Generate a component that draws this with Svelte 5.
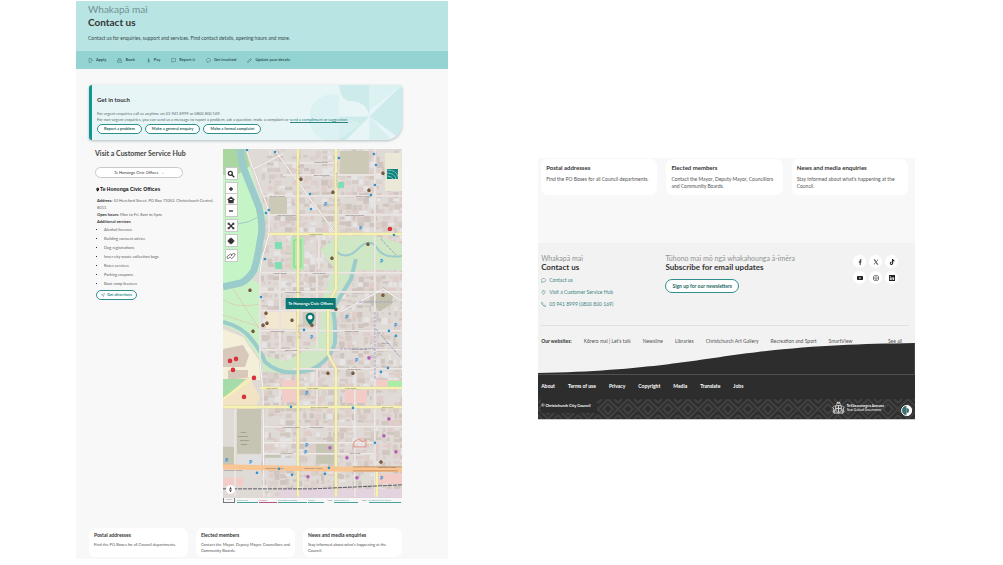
<script lang="ts">
  type Box = { x: number; y: number; w: number; h: number; tone: string };

  const actions = [
    { label: 'Apply', icon: 'M2 1h5v3M2 1v8h5M5 5h4M7.500 3.500L9 5 7.500 6.500' },
    { label: 'Book', icon: 'M1 4h8v5H1zM3 4V1h4v3M3 6h4' },
    { label: 'Pay', icon: 'M7 2H4v3h3v3H3M5 1v8' },
    { label: 'Report it', icon: 'M1 1h8v6H5L3 9V7H1z' },
    { label: 'Get involved', icon: 'M3 1h4l2 2v3L7 8H4L2 9V7L1 5V3z' },
    { label: 'Update your details', icon: 'M1 9l1-3 5-5 2 2-5 5zM6 2l2 2' }
  ];

  const services = [
    'Alcohol licences',
    'Building consent advice',
    'Dog registrations',
    'Inner city waste collection bags',
    'Rates services',
    'Parking coupons',
    'Boat ramp licences'
  ];

  const cards = [
    { title: 'Postal addresses', text: 'Find the PO Boxes for all Council departments.' },
    { title: 'Elected members', text: 'Contact the Mayor, Deputy Mayor, Councillors and Community Boards.' },
    { title: 'News and media enquiries', text: "Stay informed about what's happening at the Council." }
  ];

  const contacts = [
    { label: 'Contact us', icon: 'M3 1h4l2 2v3L7 8H4L1 9l1-2-1-2V3z' },
    { label: 'Visit a Customer Service Hub', icon: 'M5 9L2 5V3l1.500-2h3L8 3v2zM5 3v1.500' },
    { label: '03 941 8999 (0800 800 169)', icon: 'M1 1h2l1 3-1 1 2 2 1-1 3 1v2H7L1 3z' }
  ];

  const websites = ['Kōrero mai | Let’s talk', 'Newsline', 'Libraries', 'Christchurch Art Gallery', 'Recreation and Sport', 'SmartView'];
  const legal = ['About', 'Terms of use', 'Privacy', 'Copyright', 'Media', 'Translate', 'Jobs'];

  const social = [
    { name: 'Facebook', d: 'M4.500 10V6H3V4h1.500V2.500Q4.500 0 7.500.5V2H6.500Q6 2 6 3v1h1.500L7 6H6v4z' },
    { name: 'X', d: 'M1 1h2.500L9 9H6.500zM2.200 1.700L7 8.300h.8L3 1.700zM8 1h1L6 4.600 5.500 4zM1 9h1l2.700-3-.5-.7z' },
    { name: 'TikTok', d: 'M5 0h2q.2 2 2.200 2.300V4Q8 4 7 3.300V7q-.2 3-3 3T1.300 7.200Q1.300 4.300 4.300 4.300V6q-1.400 0-1.400 1.200T4 8.300 5 7z' },
    { name: 'YouTube', d: 'M1 1.500h8l1 1v5l-1 1H1l-1-1v-5zM4 3.500v3L6.700 5z' },
    { name: 'Instagram', d: 'M3 0h4l3 3v4l-3 3H3L0 7V3zM3 1L1 3v4l2 2h4l2-2V3L7 1zM5 2.500A2.500 2.500 0 115 7.500 2.500 2.500 0 015 2.500zM5 3.500a1.500 1.500 0 100 3 1.500 1.500 0 000-3z' },
    { name: 'LinkedIn', d: 'M0 0h10v10H0zM1.500 4v4.500H3V4zM1.500 1.500V3H3V1.500zM4 4v4.500h1.500V6Q6.500 4.500 7 6v2.500h1.500v-3Q8 3 5.500 4.500V4z' }
  ];

  // Building footprints scattered over the city blocks
  function makeBuildings(): Box[] {
    let seed = 17;
    const rand = () => {
      seed = (seed * 16807) % 2147483647;
      return seed / 2147483647;
    };
    const tones = ['#d2c7c0', '#d5cbc4', '#cec4bd', '#dbd0ca', '#e6e4e5', '#dfcdc9'];
    const list: Box[] = [];
    for (let y = 0; y < 350; y += 6) {
      for (let x = 38; x < 179; x += 6) {
        if (rand() < 0.15) continue;
        list.push({
          x: x + rand() * 2,
          y: y + rand() * 2,
          w: 2 + rand() * 6,
          h: 2 + rand() * 5,
          tone: tones[Math.floor(rand() * tones.length)]
        });
      }
    }
    return list;
  }

  const buildings = makeBuildings();

  const streets = [
    'M23 0L40 46 46 62V85L39 110 37 124V214L40 240 41 348',
    'M30 20L60 5M51 0L113 85M152 0V348M96 85V120',
    'M40 47H179M60 26H152M60 14H113M46 66H179',
    'M37 124H179M37 143H179M37 162H120L160 140 179 152M37 182H179M37 201H179M70 220H179',
    'M41 278H179M41 294H152M41 305H152M57 239V258M12 258V348M94 124V201M57 124V201M132 220V348M94 220V258'
  ];

  const labels = [
    { x: 91, y: 14, t: 'Peacock Street' }, { x: 91, y: 27, t: 'Beveridge Street' }, { x: 47, y: 48, t: 'Salisbury Street' },
    { x: 133, y: 48, t: 'Salisbury Street' }, { x: 54, y: 67, t: 'Peterborough Street' }, { x: 122, y: 67, t: 'Peterborough Street' },
    { x: 86, y: 86, t: 'Kilmore Street' }, { x: 50, y: 125, t: 'Armagh Street' }, { x: 89, y: 125, t: 'Armagh Street' },
    { x: 62, y: 144, t: 'Gloucester Street' }, { x: 47, y: 183, t: 'Hereford Street' }, { x: 121, y: 183, t: 'Hereford Street' },
    { x: 62, y: 202, t: 'Cashel Street' }, { x: 128, y: 201, t: 'Cashel Street Mall' }, { x: 124, y: 221, t: 'Lichfield Street' },
    { x: 43, y: 240, t: 'Tuam Street' }, { x: 84, y: 240, t: 'Tuam Street' }, { x: 122, y: 240, t: 'Tuam Street' },
    { x: 88, y: 259, t: 'Saint Asaph Street' }, { x: 159, y: 259, t: 'Saint Asaph' }, { x: 60, y: 279, t: 'Winchester Street' },
    { x: 87, y: 279, t: 'Stewart Street' }, { x: 57, y: 305, t: 'Horatio Street' }, { x: 127, y: 305, t: 'Bath Street' },
    { x: 1, y: 322, t: 'Moorhouse Avenue' }, { x: 42, y: 320, t: 'Moorhouse Avenue' }, { x: 81, y: 320, t: 'Moorhouse Avenue' },
    { x: 155, y: 319, t: 'Moorhouse Avenue' }, { x: 17, y: 284, t: 'Hagley' }, { x: 15, y: 288, t: 'Recreation' },
    { x: 17, y: 292, t: 'and Sport' }, { x: 18, y: 296, t: 'Centre' }, { x: 159, y: 195, t: 'City Mall' }
  ];

  const parking = [[103, 55], [138, 79], [89, 188], [124, 168], [173, 176], [134, 211], [84, 244], [84, 296], [83, 303], [4, 311], [28, 313], [159, 329], [159, 112]];
  const stops = [[24, 1], [52, 3], [116, 9], [151, 5], [153, 16], [152, 36], [148, 46], [87, 45], [88, 60], [46, 61], [43, 64], [171, 86], [42, 110], [38, 148], [81, 181], [166, 182], [173, 187], [158, 223], [165, 219], [68, 258], [130, 259], [152, 294], [34, 324], [56, 320], [106, 319], [102, 325], [69, 326]];
  const red = [[167, 80], [7, 212], [13, 210], [10, 221], [31, 229], [21, 248]];
  const brown = [[78, 30], [110, 43], [146, 41], [160, 24], [109, 109], [27, 141], [43, 164], [44, 174], [40, 176], [69, 171], [30, 182], [89, 176], [160, 146], [113, 160], [145, 95], [105, 224], [158, 313], [130, 224]];
  const shops = [[107, 299], [124, 309], [85, 328], [134, 329], [161, 287], [166, 270], [173, 303], [146, 209]];
</script>

<main class="board">
  <section class="page">
    <header class="hero">
      <p class="maori">Whakapā mai</p>
      <h1>Contact us</h1>
      <p class="intro">Contact us for enquiries, support and services. Find contact details, opening hours and more.</p>
    </header>
    <nav class="actions">
      {#each actions as item}
        <a href="#top">
          <svg viewBox="0 0 10 10"><path d={item.icon} /></svg>{item.label}
        </a>
      {/each}
    </nav>

    <div class="content">
      <section class="touch">
        <svg class="petals" viewBox="0 0 92 54" preserveAspectRatio="xMaxYMin slice">
          <path d="M30 10C12 6 0 20 1 31h29zM1 31C1 46 10 54 20 54h10V31zM60 0v25L92 0z" fill="#dcf1f1" />
          <path d="M30 0C32 14 37 16 44 16 54 17 59 23 60 31V0zM30 31h30L37 54h-7zM60 31L92 0v54z" fill="#cdebeb" />
          <path d="M60 31v23h22zM30 31v23l22-16z" fill="#d8efef" />
        </svg>
        <h2>Get in touch</h2>
        <p>For urgent enquiries call us anytime on 03 941 8999 or 0800 800 169.</p>
        <p>For non-urgent enquiries, you can send us a message to report a problem, ask a question, make a complaint or <a href="#suggest">send a compliment or suggestion.</a></p>
        <div class="buttons">
          <button class="pill">Report a problem</button>
          <button class="pill">Make a general enquiry</button>
          <button class="pill">Make a formal complaint</button>
        </div>
      </section>

      <div class="hub">
        <section class="details">
          <h2>Visit a Customer Service Hub</h2>
          <select aria-label="Customer Service Hub">
            <option>Te Hononga Civic Offices &nbsp; ⌵</option>
          </select>
          <h3>
            <svg viewBox="0 0 8 10"><path d="M4 10L1 6V2l2-2h3l2 2v4zM4 2v3h1V2z" /></svg>Te Hononga Civic Offices
          </h3>
          <p><b>Address:</b> 53 Hereford Street, PO Box 73052, Christchurch Central, 8011</p>
          <p><b>Open hours:</b> Mon to Fri, 8am to 5pm.</p>
          <p><b>Additional services</b></p>
          <ul>
            {#each services as service}
              <li>{service}</li>
            {/each}
          </ul>
          <button class="pill directions">
            <svg viewBox="0 0 10 10"><path d="M1 5l8-4-3 8-1-4z" /></svg>Get directions
          </button>
        </section>

        <div class="map">
          <svg class="tiles" viewBox="0 0 179 354">
            <rect width="179" height="354" fill="#e0dad7" />
            {#each buildings as b}
              <rect x={b.x} y={b.y} width={b.w} height={b.h} fill={b.tone} />
            {/each}
            <path d="M117 2h29v23h-29zM46 48h18v18H46zM80 163h15v14H80z" fill="#ccc9b7" />
            <path d="M145 152l15-14 10 7-1 10-12 7z" fill="#c4c2ae" />
            <path d="M52 93h7v7h-7zM52 113h7v7h-7zM115 33h6v6h-6z" fill="#7fdfb2" />
            <path d="M115 87h38l26 8v26h-45l-18 33-9 54-32 18-38-4-14-20 12 3 28 7 28-15 7-20-1-22 14-36-14-18z" fill="#cfe7c4" />
            <path d="M68 88h13v33H68z" fill="#b4e8b4" />
            <path d="M71 91h7v27h-7z" fill="none" stroke="#7fd48f" />
            <path d="M0 0h22l10 35 11 30-4 35-2 20-10 13L0 138z" fill="#c5f5c6" />
            <path d="M0 0h22l5 17-13 9H0z" fill="#aad7a0" />
            <path d="M0 138l27-8 10 5v74L18 184 0 176z" fill="#caf0c5" />
            <path d="M0 150q12 10 37 5M0 166l37 12M9 138l28 43" class="track" />
            <path d="M0 180l20 8 17 25v18H0z" fill="#f4efd8" />
            <path d="M0 200l20-4 6 10-4 12H0zM5 221h20v14H5z" fill="#d7c8bb" />
            <path d="M0 232l26-4 11 20-5 12H0z" fill="#f3e3c5" />
            <path d="M0 230h23L0 250z" fill="#a6dcaa" />
            <path d="M0 250L27 231" stroke="#f8f2b0" stroke-width="2" />
            <path d="M14 260h24v45H14zM0 298h12v19H0zM93 295h18v20H93zM42 305h16v14H42z" fill="#c6c5b4" />
            <path d="M14 306h24v11H14zM42 309h32v8H42z" fill="#dfe0df" />
            <path d="M59 231h15v22H59zM122 241h22v13h-22zM152 231h27v9h-27zM153 325h26v10h-26zM0 329h20v8H0z" fill="#f3cbc7" />
            <path d="M165 232h14v7h-14z" fill="#a8efa6" />
            <path d="M162 4h17v38h-17z" fill="#ece8d7" />
            <path d="M43 162h30v18H43z" fill="#f1e8cf" />
            <path d="M56 340h123v9H56z" fill="#e2d3df" />
            <path d="M17 0Q18 14 24 28L36 58Q41 76 37 93 34 112 31 121 26 130 18 134L0 138" class="river" />
            <path d="M0 173Q20 178 29 191 38 202 42 213 60 229 88 221 108 211 112 194 113 176 110 160L128 130 133 110" class="river lower" />
            <path d="M113 102Q123 112 135 100T154 99 179 107" class="river small" />
            <path d="M15 75Q27 74 37 67" class="river tiny" />
            {#each streets as d}
              <path {d} class="casing" />
              <path {d} class="street" />
            {/each}
            <path d="M75 0V348M113 0V140L105 155V205L113 220V348M46 85H179M37 239H179M0 258H179M154 320V348" class="casing main" />
            <path d="M75 0V348M113 0V140L105 155V205L113 220V348M46 85H179M37 239H179M0 258H179M154 320V348" class="street main" />
            <path d="M0 318L90 320 179 321" class="avenue" />
            <path d="M130 318H179M130 322H175" stroke="#c9905f" stroke-width="1" />
            <path d="M0 340H90L179 336" class="rail" />
            <path d="M136 153H170M152 163V230M117 200H152M153 180l24 28M158 90l15 16" class="foot" />
            <path d="M131 293l5-3 4 3 3-2v7h-12z" fill="none" stroke="#e99083" />
            {#each labels as l}
              <text x={l.x} y={l.y}>{l.t}</text>
            {/each}
            {#each ['Colombo Street', 'Durham Street North', 'Montreal Street'] as name, i}
              <text x="0" y="0" transform="translate({[114, 76, 76][i]} {[38, 30, 190][i]}) rotate(-90)">{name}</text>
            {/each}
            {#each parking as p}
              <text class="park" x={p[0] - 2} y={p[1] + 2}>P</text>
            {/each}
            {#each stops as s}
              <circle cx={s[0]} cy={s[1]} r="1.300" fill="#2c93cc" />
            {/each}
            {#each red as r}
              <circle cx={r[0]} cy={r[1]} r="2.300" fill="#d8333b" />
            {/each}
            {#each brown as b}
              <path d="M{b[0] - 2} {b[1]}l2-2 2 2-1 2h-2z" fill="#795a42" />
            {/each}
            {#each shops as s}
              <circle cx={s[0]} cy={s[1]} r="1.800" fill="#b560b5" />
            {/each}
            <path d="M164 20h11v10h-11z" fill="#10807d" />
            <path d="M164 24q8 0 9 6M164 21q10 0 11 7M164 27q5 0 6 3" fill="none" stroke="#78c3be" />
          </svg>

          <div class="tools">
            <button aria-label="Search"><svg viewBox="0 0 12 12"><circle cx="5" cy="5" r="3" /><path d="M7 7l4 4" /></svg></button>
            <div class="zoom">
              <button aria-label="Zoom in"><svg viewBox="0 0 12 12"><path d="M6 3v6M3 6h6" /></svg></button>
              <button aria-label="Default view"><svg viewBox="0 0 12 12"><path d="M1 6l5-4 5 4M3 5v5h2V7h2v3h2V5" /></svg></button>
              <button aria-label="Zoom out"><svg viewBox="0 0 12 12"><path d="M3 6h6" /></svg></button>
            </div>
            <button aria-label="Full extent"><svg viewBox="0 0 12 12"><path d="M2 2l8 8M10 2l-8 8M2 4V2h2M8 2h2v2M10 8v2H8M4 10H2V8" /></svg></button>
            <button aria-label="My location"><svg viewBox="0 0 12 12"><circle cx="6" cy="6" r="3" fill="#333" /><path d="M6 1v10M1 6h10" /></svg></button>
            <button aria-label="Measure"><svg class="fine" viewBox="0 0 12 12"><path d="M5 7L2 10 0 9V7l5-4 2 1v2M5 8l2 2 5-5V3l-2-1-4 3" /></svg></button>
          </div>
          <div class="marker">
            <span>Te Hononga Civic Offices</span>
            <svg viewBox="0 0 10 14"><path d="M5 14Q0 8 0 5a5 5 0 0110 0q0 3-5 9z" fill="#0c7774" /><circle cx="5" cy="5" r="2.500" fill="#fff" /></svg>
          </div>
          <div class="compass"><svg viewBox="0 0 10 10"><path d="M5 1L3 5h4zM3 6h4L5 9z" /></svg></div>
          <div class="credit">
            <span class="scale">100 m</span>
            <a href="#terms">Terms of use</a><a href="#feedback" class="visited">Feedback</a><a href="#info">Copyright information</a><a href="#leaf">Leaflet</a>
            <span>| Data</span><a href="#osm">OpenStreetMap</a><span>| Base</span><a href="#ccc">Christchurch City Council</a>
          </div>
        </div>
      </div>

      <div class="cards">
        {#each cards as card}
          <article>
            <h3>{card.title}</h3>
            <p>{card.text}</p>
          </article>
        {/each}
      </div>
    </div>
  </section>

  <section class="bottom">
    <div class="cards wide">
      {#each cards as card}
        <article>
          <h3>{card.title}</h3>
          <p>{card.text}</p>
        </article>
      {/each}
    </div>

    <footer>
      <div class="columns">
        <div class="contact">
          <p class="maori">Whakapā mai</p>
          <h2>Contact us</h2>
          <ul>
            {#each contacts as item}
              <li><a href="#contact"><svg viewBox="0 0 10 10"><path d={item.icon} /></svg>{item.label}</a></li>
            {/each}
          </ul>
        </div>
        <div class="subscribe">
          <p class="maori">Tūhono mai mō ngā whakahounga ā-īmēra</p>
          <h2>Subscribe for email updates</h2>
          <button class="pill large">Sign up for our newsletters</button>
        </div>
        <div class="social">
          {#each social as item}
            <a href="#social" aria-label={item.name}><svg viewBox="0 0 10 10"><path d={item.d} fill-rule="evenodd" /></svg></a>
          {/each}
        </div>
      </div>

      <nav class="sites">
        <b>Our websites:</b>
        {#each websites as site}
          <a href="#site">{site}</a>
        {/each}
        <a class="all" href="#all">See all</a>
      </nav>
      <svg class="wave" viewBox="0 0 377 31" preserveAspectRatio="none">
        <path d="M0 31V30C110 28 160 16 220 9 280 2 320 1 377 0v31z" />
      </svg>

      <div class="dark">
        <nav class="legal">
          {#each legal as item}
            <a href="#legal">{item}</a>
          {/each}
        </nav>
        <div class="band">
          <svg class="weave" aria-hidden="true">
            <defs>
              <pattern id="weave" width="20" height="20" patternUnits="userSpaceOnUse">
                <path d="M0 10L10 0l10 10-10 10zM5 10l5-5 5 5-5 5zM0 4l4-4M16 0l4 4M0 16l4 4M16 20l4-4" fill="none" stroke="#404040" stroke-width="2" />
              </pattern>
            </defs>
            <rect width="100%" height="100%" fill="url(#weave)" />
          </svg>
          <small>© Christchurch City Council</small>
          <div class="govt">
            <svg viewBox="0 0 14 14">
              <path d="M4 5h6v5l-3 3-3-3zM5 4l1-3 1 2 1-2 1 3M3 5L1 7l1 2-1 3h2V9M11 5l2 2-1 2 1 3h-2V9M2 13h10M7 5v7M4 8h6" />
            </svg>
            <p><b>Te Kāwanatanga o Aotearoa</b><br />New Zealand Government</p>
          </div>
          <button class="contrast" aria-label="Accessibility"><svg viewBox="0 0 11 11"><circle cx="5.500" cy="5.500" r="5" fill="#3c6f6f" stroke="#fff" /><path d="M5.500 0a5.500 5.500 0 010 11z" fill="#fff" /><path d="M5.500 3a2.500 2.500 0 010 5z" fill="#3c6f6f" /></svg></button>
        </div>
      </div>
    </footer>
  </section>
</main>

<style>
  :global(body) {
    background: #fff;
    font-family: "Lato", "Noto Sans", sans-serif;
    color: #333;
  }

  .board {
    display: grid;
    grid-template-columns: 372fr 377fr;
    column-gap: 9vw;
    align-items: start;
    padding: 1px 88px 0 76px;
  }

  h1, h2, h3, p, ul {
    margin: 0;
    padding: 0;
  }

  ul {
    list-style: none;
  }

  a {
    color: inherit;
    text-decoration: none;
  }

  button, select {
    font: inherit;
    color: inherit;
    margin: 0;
    padding: 0;
    border: 0;
  }

  svg {
    display: block;
    fill: none;
    stroke-width: 1;
  }

  .page, .bottom {
    min-width: 0;
    background: #f8f8f8;
  }

  .hero {
    background: #b8e4e4;
    padding: 2px 12px 9px;
  }

  .maori {
    color: #8e9293;
  }

  .hero .maori {
    color: #6f9193;
    font-size: 10px;
    line-height: 13px;
  }

  h1 {
    font-size: 10px;
    line-height: 13px;
  }

  .intro {
    margin-top: 5px;
    font-size: 5px;
    line-height: 8px;
    color: #37494a;
  }

  .actions {
    display: flex;
    gap: 11px;
    padding: 5px 12px;
    background: #93d4d3;
    font-size: 4px;
    font-weight: 700;
    line-height: 8px;
    color: #31595a;
  }

  .actions a {
    display: flex;
    align-items: center;
    gap: 3px;
  }

  .actions svg {
    width: 5px;
    height: 5px;
    stroke: #47797a;
  }

  .content {
    padding: 16px 46px 2px 13px;
  }

  .touch {
    position: relative;
    overflow: hidden;
    padding: 10px 6px 6px 5px;
    border-left: 3px solid #119692;
    border-radius: 3px 3px 16px 3px;
    background: #e7f5f6;
    box-shadow: 0 1px 3px #b3bbbb;
    font-size: 4px;
    line-height: 6px;
    color: #5d6c6d;
  }

  .touch > :not(.petals) {
    position: relative;
  }

  .petals {
    position: absolute;
    top: 0;
    right: 0;
    width: 92px;
    height: 100%;
  }

  .touch h2 {
    margin-bottom: 7px;
    font-size: 6px;
    line-height: 9px;
    color: #333;
  }

  .touch p {
    white-space: nowrap;
  }

  .touch a {
    color: #2a8482;
    border-bottom: 1px solid #2a8482;
  }

  .buttons {
    display: flex;
    gap: 3px;
    margin-top: 1px;
  }

  .pill {
    padding: 0 6px;
    border: 1px solid #2f8f8d;
    border-radius: 8px;
    background: #fff;
    font-size: 4px;
    font-weight: 700;
    line-height: 8px;
    color: #246866;
    white-space: nowrap;
  }

  .hub {
    display: grid;
    grid-template-columns: 121fr 179fr;
    column-gap: 7px;
    margin-top: 9px;
    padding-left: 6px;
  }

  .details {
    font-size: 4px;
    line-height: 7px;
    color: #626262;
  }

  .details h2 {
    font-size: 7px;
    line-height: 9px;
    color: #444;
    white-space: nowrap;
  }

  .details select {
    display: block;
    appearance: none;
    width: 73%;
    height: 11px;
    margin: 9px 0 7px;
    border: 1px solid #c9c9c9;
    border-radius: 6px;
    background: #fff;
    text-align: center;
    text-align-last: center;
    color: #333;
  }

  .details h3 {
    display: flex;
    align-items: center;
    gap: 1px;
    margin: 0 0 4px 1px;
    font-family: "Liberation Sans", sans-serif;
    font-size: 5px;
    line-height: 8px;
    color: #111;
  }

  .details h3 svg {
    width: 3px;
    height: 5px;
    fill: #111;
  }

  .details p {
    margin-left: 2px;
  }

  .details b {
    color: #333;
  }

  .details li {
    position: relative;
    padding-left: 9px;
    line-height: 9px;
  }

  .details li::before {
    content: "";
    position: absolute;
    top: 4px;
    left: 1px;
    width: 1px;
    height: 1px;
    background: #333;
  }

  .directions {
    display: flex;
    align-items: center;
    gap: 2px;
    margin: 2px 0 0 1px;
    padding: 0 4px;
    color: #2f8f8d;
  }

  .directions svg {
    width: 4px;
    height: 4px;
    stroke: #2f8f8d;
  }

  .map {
    position: relative;
    overflow: hidden;
  }

  .tiles {
    width: 100%;
  }

  .river {
    stroke: #9ccbcb;
    stroke-width: 7;
  }

  .river.lower {
    stroke-width: 4;
  }

  .river.small {
    stroke-width: 2;
  }

  .river.tiny {
    stroke-width: 1;
  }

  .casing {
    stroke: #d6cdc8;
    stroke-width: 2;
  }

  .street {
    stroke: #fcfafa;
    stroke-width: 1;
  }

  .casing.main {
    stroke: #ded7a8;
    stroke-width: 3;
  }

  .street.main {
    stroke: #f8f2b0;
    stroke-width: 2;
  }

  .avenue {
    stroke: #f9c593;
    stroke-width: 5;
  }

  .rail {
    stroke: #5b5b63;
    stroke-width: 1;
    stroke-dasharray: 4 1;
  }

  .track {
    stroke: #e8b6a2;
    stroke-dasharray: 1 1;
  }

  .foot {
    stroke: #9fa3c6;
    stroke-dasharray: 3 1;
  }

  .tiles text {
    font-family: "Noto Sans", sans-serif;
    font-size: 2px;
    fill: #6b6663;
  }

  .tiles .park {
    font-size: 5px;
    font-weight: 700;
    fill: #2f95dc;
  }

  .tools {
    position: absolute;
    top: 19px;
    left: 3px;
    display: grid;
    gap: 4px;
  }

  .tools button {
    display: grid;
    place-items: center;
    width: 11px;
    height: 11px;
    background: #fff;
    outline: 1px solid #c9c9c9;
  }

  .tools svg {
    width: 8px;
    height: 8px;
    stroke: #333;
    stroke-width: 2;
  }

  .tools .fine {
    width: 10px;
    stroke-width: 1;
  }

  .zoom {
    display: grid;
  }

  .marker {
    position: absolute;
    top: 42%;
    left: 49%;
    display: grid;
    justify-items: center;
    gap: 3px;
    transform: translateX(-50%);
  }

  .marker span {
    padding: 0 3px;
    background: #0c7774;
    font-size: 4px;
    font-weight: 700;
    line-height: 11px;
    color: #fff;
    white-space: nowrap;
  }

  .marker svg {
    width: 9px;
    height: 14px;
  }

  .compass {
    position: absolute;
    bottom: 9px;
    left: 3px;
    padding: 1px;
    border-radius: 50%;
    background: #fff;
  }

  .compass svg {
    width: 7px;
    height: 7px;
    fill: #444;
  }

  .credit {
    position: absolute;
    right: 0;
    bottom: 0;
    left: 0;
    display: flex;
    justify-content: space-between;
    background: #f6f6f6;
    font-size: 2px;
    line-height: 4px;
    color: #777;
    white-space: nowrap;
  }

  .credit a {
    flex: 1 1 auto;
    margin-right: 1px;
    border-bottom: 1px solid #4b9f9d;
    color: #4b9f9d;
  }

  .credit .visited {
    border-color: #b05484;
    color: #b05484;
  }

  .credit span {
    margin: 0 2px;
  }

  .credit .scale {
    margin-left: 0;
    padding: 0 2px;
    border: 1px solid #777;
    border-top: 0;
    line-height: 3px;
  }

  .cards {
    display: grid;
    grid-template-columns: repeat(3, 1fr);
    gap: 8px;
    margin-top: 25px;
  }

  .cards article {
    min-height: 22px;
    padding: 3px 5px;
    border-radius: 7px;
    background: #fff;
    font-size: 4px;
    line-height: 6px;
    color: #555;
  }

  .cards h3 {
    margin-bottom: 2px;
    font-size: 5px;
    line-height: 9px;
    color: #333;
  }

  .bottom {
    margin-top: 157px;
    border-bottom: 1px solid #ccc;
  }

  .wide {
    gap: 9px;
    margin: 0;
    padding: 1px 7px 48px 3px;
  }

  .wide article {
    min-height: 28px;
    padding: 4px 5px;
    font-size: 5px;
    line-height: 7px;
  }

  .wide h3 {
    margin-bottom: 3px;
    font-size: 6px;
    line-height: 10px;
  }

  footer {
    background: #f2f2f2;
  }

  .columns {
    display: grid;
    grid-template-columns: 126fr 190fr 45fr;
    margin: 0 6px 0 3px;
    padding: 10px 11px 15px 0;
    border-bottom: 1px solid #e0e0e0;
  }

  .columns .maori {
    font-size: 7px;
    line-height: 10px;
    white-space: nowrap;
  }

  .columns h2 {
    font-size: 8px;
    line-height: 9px;
    white-space: nowrap;
  }

  .contact ul {
    margin-top: 2px;
    font-size: 5px;
    line-height: 12px;
    color: #3c8584;
  }

  .contact a {
    display: flex;
    align-items: center;
    gap: 3px;
  }

  .contact svg {
    width: 5px;
    height: 5px;
    stroke: #3c8584;
  }

  .large {
    margin-top: 1px;
    font-size: 5px;
    line-height: 12px;
  }

  .social {
    display: grid;
    grid-template-columns: repeat(3, 13px);
    align-content: start;
    justify-content: end;
    gap: 3px;
    padding-top: 2px;
  }

  .social a {
    display: grid;
    place-items: center;
    height: 13px;
    border-radius: 50%;
    background: #fff;
  }

  .social svg {
    width: 6px;
    height: 6px;
    fill: #222;
  }

  .sites {
    display: flex;
    gap: 12px;
    padding: 11px 13px 0 3px;
    font-size: 5px;
    line-height: 8px;
    color: #555;
    white-space: nowrap;
  }

  .sites b {
    color: #333;
  }

  .all {
    margin-left: auto;
    text-decoration: underline;
  }

  .wave {
    width: 100%;
    height: 31px;
    margin-top: -2px;
  }

  .wave path {
    fill: #2d2d2d;
  }

  .dark {
    background: #2d2d2d;
    color: #fff;
  }

  .legal {
    display: flex;
    gap: 13px;
    padding: 7px 3px 9px;
    border-top: 1px solid #505050;
    font-size: 5px;
    font-weight: 700;
    line-height: 8px;
  }

  .band {
    position: relative;
    display: flex;
    align-items: flex-start;
    gap: 17px;
    height: 20px;
    padding: 0 3px;
  }

  .band > * {
    position: relative;
  }

  .band .weave {
    position: absolute;
    inset: 0;
    width: 100%;
    height: 100%;
  }

  .band small {
    margin-right: auto;
    padding-right: 6px;
    background: #2d2d2d;
    font-size: 4px;
    font-weight: 700;
    line-height: 14px;
  }

  .govt {
    display: flex;
    align-items: center;
    gap: 2px;
    padding-top: 2px;
    font-size: 3px;
    line-height: 4px;
  }

  .govt svg {
    width: 13px;
    height: 13px;
    stroke: #ddd;
  }

  .contrast {
    align-self: flex-end;
    padding-bottom: 3px;
    background: none;
  }

  .contrast svg {
    width: 11px;
    height: 11px;
  }
</style>
